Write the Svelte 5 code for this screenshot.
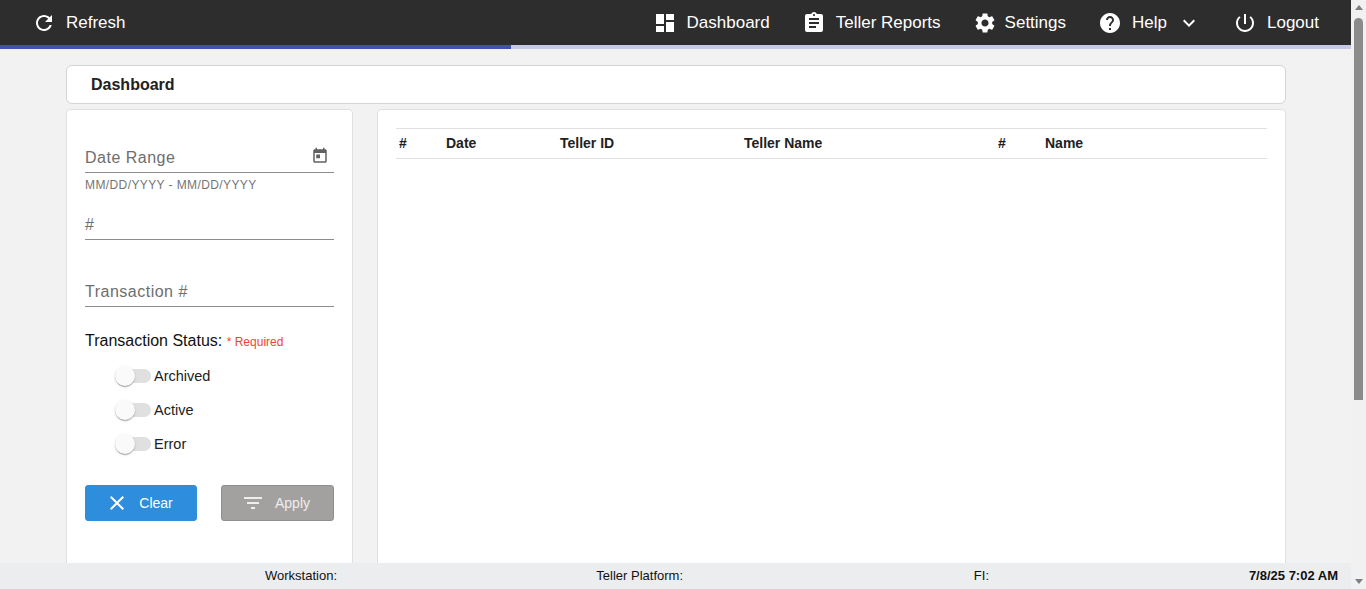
<script>
  const icons = {
    refresh: 'M17.65 6.35C16.2 4.9 14.21 4 12 4c-4.42 0-7.99 3.58-7.99 8s3.57 8 7.99 8c3.73 0 6.84-2.55 7.73-6h-2.08c-.82 2.33-3.04 4-5.65 4-3.31 0-6-2.69-6-6s2.69-6 6-6c1.66 0 3.14.69 4.22 1.78L13 11h7V4l-2.35 2.35z',
    dashboard: 'M3 13h8V3H3v10zm0 8h8v-6H3v6zm10 0h8V11h-8v10zm0-18v6h8V3h-8z',
    assignment: 'M19 3h-4.18C14.4 1.84 13.3 1 12 1c-1.3 0-2.4.84-2.82 2H5c-1.1 0-2 .9-2 2v14c0 1.1.9 2 2 2h14c1.1 0 2-.9 2-2V5c0-1.1-.9-2-2-2zm-7 0c.55 0 1 .45 1 1s-.45 1-1 1-1-.45-1-1 .45-1 1-1zm2 14H7v-2h7v2zm3-4H7v-2h10v2zm0-4H7V7h10v2z',
    settings: 'M19.14 12.94c.04-.3.06-.61.06-.94 0-.32-.02-.64-.07-.94l2.03-1.58c.18-.14.23-.41.12-.61l-1.92-3.32c-.12-.22-.37-.29-.59-.22l-2.39.96c-.5-.38-1.03-.7-1.62-.94l-.36-2.54c-.04-.24-.24-.41-.48-.41h-3.84c-.24 0-.43.17-.47.41l-.36 2.54c-.59.24-1.13.57-1.62.94l-2.39-.96c-.22-.08-.47 0-.59.22L2.74 8.87c-.12.21-.08.47.12.61l2.03 1.58c-.05.3-.09.63-.09.94s.02.64.07.94l-2.03 1.58c-.18.14-.23.41-.12.61l1.92 3.32c.12.22.37.29.59.22l2.39-.96c.5.38 1.03.7 1.62.94l.36 2.54c.05.24.24.41.48.41h3.84c.24 0 .44-.17.47-.41l.36-2.54c.59-.24 1.13-.56 1.62-.94l2.39.96c.22.08.47 0 .59-.22l1.92-3.32c.12-.22.07-.47-.12-.61l-2.01-1.58zM12 15.6c-1.98 0-3.6-1.62-3.6-3.6s1.62-3.6 3.6-3.6 3.6 1.62 3.6 3.6-1.62 3.6-3.6 3.6z',
    help: 'M12 2C6.48 2 2 6.48 2 12s4.48 10 10 10 10-4.48 10-10S17.52 2 12 2zm1 17h-2v-2h2v2zm2.07-7.75l-.9.92C13.45 12.9 13 13.5 13 15h-2v-.5c0-1.1.45-2.1 1.17-2.83l1.24-1.26c.37-.36.59-.86.59-1.41 0-1.1-.9-2-2-2s-2 .9-2 2H8c0-2.21 1.79-4 4-4s4 1.79 4 4c0 .88-.36 1.68-.93 2.25z',
    expand: 'M16.59 8.59L12 13.17 7.41 8.59 6 10l6 6 6-6z',
    power: 'M13 3h-2v10h2V3zm4.83 2.17l-1.42 1.42C17.99 7.86 19 9.81 19 12c0 3.87-3.13 7-7 7s-7-3.13-7-7c0-2.19 1.01-4.14 2.58-5.42L6.17 5.17C4.23 6.82 3 9.26 3 12c0 4.97 4.03 9 9 9s9-4.03 9-9c0-2.74-1.23-5.18-3.17-6.83z',
    today: 'M19 3h-1V1h-2v2H8V1H6v2H5c-1.11 0-1.99.9-1.99 2L3 19c0 1.1.89 2 2 2h14c1.1 0 2-.9 2-2V5c0-1.1-.9-2-2-2zm0 16H5V8h14v11zM7 10h5v5H7z',
    close: 'M19 6.41L17.59 5 12 10.59 6.41 5 5 6.41 10.59 12 5 17.59 6.41 19 12 13.41 17.59 19 19 17.59 13.41 12z',
    filter: 'M10 18h4v-2h-4v2zM3 6v2h18V6H3zm3 7h12v-2H6v2z'
  };

  const navItems = [
    { icon: 'dashboard', label: 'Dashboard' },
    { icon: 'assignment', label: 'Teller Reports' },
    { icon: 'settings', label: 'Settings', tight: true },
    { icon: 'help', label: 'Help', caret: true },
    { icon: 'power', label: 'Logout' }
  ];

  const columns = ['#', 'Date', 'Teller ID', 'Teller Name', '#', 'Name'];
  const statuses = ['Archived', 'Active', 'Error'];
  const progress = 37.8;
</script>

<div class="shell">
  <div class="page">
    <nav class="topbar">
      <div class="nav-item refresh">
        <svg class="icon" viewBox="0 0 24 24"><path d={icons.refresh} /></svg>
        <span>Refresh</span>
      </div>
      <div class="nav-right">
        {#each navItems as item}
          <div class="nav-item" class:tight={item.tight}>
            <svg class="icon" viewBox="0 0 24 24"><path d={icons[item.icon]} /></svg>
            <span>{item.label}</span>
            {#if item.caret}
              <svg class="icon caret" viewBox="0 0 24 24"><path d={icons.expand} /></svg>
            {/if}
          </div>
        {/each}
      </div>
    </nav>
    <div class="progress"><div class="progress-value" style:width="{progress}%"></div></div>

    <main class="content">
      <div class="title-card">Dashboard</div>
      <div class="panels">
        <section class="filters">
          <div class="field date">
            <div class="field-line">
              <span>Date Range</span>
              <svg class="today" viewBox="0 0 24 24"><path d={icons.today} /></svg>
            </div>
            <div class="hint">MM/DD/YYYY - MM/DD/YYYY</div>
          </div>
          <div class="field number">
            <div class="field-line"><span>#</span></div>
          </div>
          <div class="field number">
            <div class="field-line"><span>Transaction #</span></div>
          </div>

          <div class="status-label">Transaction Status: <small>* Required</small></div>
          <div class="toggles">
            {#each statuses as status}
              <div class="toggle-row">
                <span class="toggle"><span class="knob"></span></span>
                <span>{status}</span>
              </div>
            {/each}
          </div>

          <div class="actions">
            <button class="btn clear">
              <svg viewBox="0 0 24 24"><path d={icons.close} /></svg>
              Clear
            </button>
            <button class="btn apply">
              <svg viewBox="0 0 24 24"><path d={icons.filter} /></svg>
              Apply
            </button>
          </div>
        </section>

        <section class="results">
          <div class="table-head">
            {#each columns as col}
              <div>{col}</div>
            {/each}
          </div>
        </section>
      </div>
    </main>

    <footer class="status-bar">
      <div>Workstation:</div>
      <div>Teller Platform:</div>
      <div>FI:</div>
      <div class="clock">7/8/25 7:02 AM</div>
    </footer>
  </div>

  <div class="scrollbar">
    <span class="arrow up"></span>
    <div class="track"><div class="thumb"></div></div>
    <span class="arrow down"></span>
  </div>
</div>

<style>
  :global(body) {
    margin: 0;
    background: #f2f2f2;
    overflow: hidden;
  }

  .shell {
    display: flex;
    height: 589px;
    font-family: "Liberation Sans", Arial, sans-serif;
    color: #212121;
  }

  .page {
    flex: 1;
    min-width: 0;
    display: flex;
    flex-direction: column;
  }

  .topbar {
    flex: none;
    height: 45px;
    background: #2d2d2d;
    color: #fff;
    display: flex;
    align-items: center;
    justify-content: space-between;
    padding: 0 32px;
    font-size: 17px;
  }

  .nav-right {
    display: flex;
    gap: 32px;
  }

  .nav-item {
    display: flex;
    align-items: center;
    gap: 10px;
  }

  .nav-item.tight {
    gap: 8px;
  }

  .icon {
    width: 24px;
    height: 24px;
    fill: #fff;
  }

  .progress {
    flex: none;
    height: 4px;
    background: #c5cae9;
  }

  .progress-value {
    height: 100%;
    background: #3f51b5;
  }

  .content {
    flex: 1;
    min-height: 0;
    overflow: hidden;
    padding: 16px 65px 0 66px;
  }

  .title-card {
    height: 37px;
    line-height: 37px;
    padding-left: 24px;
    background: #fff;
    border: 1px solid #d4d4d4;
    border-radius: 6px;
    font-size: 16px;
    font-weight: bold;
  }

  .panels {
    display: grid;
    grid-template-columns: 287px 1fr;
    gap: 24px;
    margin-top: 5px;
  }

  .filters,
  .results {
    background: #fff;
    border: 1px solid #e0e0e0;
    border-radius: 4px;
    height: 520px;
    box-sizing: border-box;
  }

  .filters {
    padding: 30px 18px 0;
  }

  .field-line {
    display: flex;
    align-items: flex-end;
    justify-content: space-between;
    box-sizing: border-box;
    height: 33px;
    padding-bottom: 5px;
    border-bottom: 1px solid #8c8c8c;
    font-size: 16px;
    letter-spacing: 0.5px;
    color: #6e6e6e;
  }

  .today {
    width: 18px;
    height: 18px;
    fill: #616161;
    margin: 0 5px 2px 0;
  }

  .hint {
    margin-top: 5px;
    font-size: 12px;
    letter-spacing: 0.4px;
    color: #757575;
  }

  .number {
    margin-top: 15px;
  }

  .number + .number {
    margin-top: 34px;
  }

  .status-label {
    margin-top: 25px;
    font-size: 16px;
    color: #111;
  }

  .status-label small {
    font-size: 12px;
    color: #f44336;
  }

  .toggles {
    display: flex;
    flex-direction: column;
    gap: 14px;
    margin-top: 16px;
    padding-left: 30px;
  }

  .toggle-row {
    display: flex;
    align-items: center;
    gap: 3px;
    height: 20px;
    font-size: 14.5px;
    color: #212121;
  }

  .toggle {
    position: relative;
    width: 36px;
    height: 14px;
    border-radius: 7px;
    background: #e0e0e0;
  }

  .knob {
    position: absolute;
    left: 0;
    top: -3px;
    width: 20px;
    height: 20px;
    border-radius: 50%;
    background: #fafafa;
    box-shadow: 0 2px 1px -1px rgba(0, 0, 0, 0.2), 0 1px 1px rgba(0, 0, 0, 0.14), 0 1px 3px rgba(0, 0, 0, 0.12);
  }

  .actions {
    display: flex;
    justify-content: space-between;
    margin-top: 31px;
  }

  .btn {
    display: flex;
    align-items: center;
    justify-content: center;
    gap: 10px;
    width: 113px;
    height: 36px;
    box-sizing: border-box;
    border-radius: 3px;
    font-family: inherit;
    font-size: 14px;
    color: #fff;
    padding: 0 4px 0 0;
  }

  .btn svg {
    width: 24px;
    height: 24px;
    fill: #fff;
  }

  .clear {
    background: #2e8ddd;
    border: 1px solid #2e8ddd;
    width: 112px;
  }

  .apply {
    background: #a3a1a0;
    border: 1px solid #8f8f8f;
    color: #eee;
  }

  .apply svg {
    fill: #eee;
  }

  .results {
    padding: 18px 18px 0;
  }

  .table-head {
    display: grid;
    grid-template-columns: 47px 114px 184px 254px 47px 1fr;
    align-items: center;
    box-sizing: border-box;
    height: 31px;
    padding: 0 0 2px 3px;
    border-top: 1px solid #e0e0e0;
    border-bottom: 1px solid #e0e0e0;
    font-size: 14px;
    font-weight: bold;
  }

  .status-bar {
    flex: none;
    height: 26px;
    box-sizing: border-box;
    padding-bottom: 2px;
    background: #ecedef;
    display: grid;
    grid-template-columns: 337px 346px 306px 349px;
    align-items: center;
    text-align: right;
    font-size: 13px;
    color: #111;
  }

  .clock {
    font-weight: bold;
  }

  .scrollbar {
    flex: none;
    width: 15px;
    background: #f1f1f1;
    display: flex;
    flex-direction: column;
    align-items: center;
  }

  .track {
    flex: 1;
    width: 100%;
    padding: 0 3px;
    box-sizing: border-box;
  }

  .thumb {
    height: 382px;
    margin-top: 3px;
    background: #8b8b8b;
    border-radius: 5px 5px 0 0;
  }

  .arrow {
    flex: none;
    width: 0;
    height: 0;
    margin: 5px 0;
    border-left: 4.5px solid transparent;
    border-right: 4.5px solid transparent;
  }

  .arrow.up {
    border-bottom: 5px solid #7e7e7e;
  }

  .arrow.down {
    border-top: 5px solid #7e7e7e;
  }
</style>
